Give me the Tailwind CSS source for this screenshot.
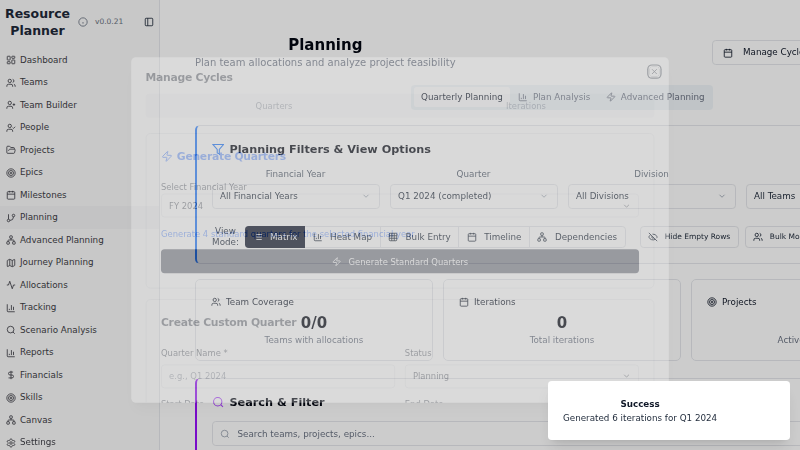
<!DOCTYPE html>
<html lang="en" class="text-[10px]">
<head>
    <meta charset="UTF-8">
    <meta name="viewport" content="width=device-width, initial-scale=1.0">
    <title>Resource Planner - Planning</title>
    <script src="https://cdn.jsdelivr.net/npm/@tailwindcss/browser@4"></script>
</head>
<body class="relative w-[80rem] h-[45rem] overflow-hidden bg-white text-gray-900 font-['DejaVu_Sans',sans-serif] blur-[0.3px]">
    <!-- icon sprite (lucide shapes) -->
    <svg class="hidden" xmlns="http://www.w3.org/2000/svg">
        <symbol id="i-dashboard" viewBox="0 0 24 24"><rect x="3" y="3" width="7" height="9" rx="1"/><rect x="14" y="3" width="7" height="5" rx="1"/><rect x="14" y="12" width="7" height="9" rx="1"/><rect x="3" y="16" width="7" height="5" rx="1"/></symbol>
        <symbol id="i-users" viewBox="0 0 24 24"><path d="M16 21v-2a4 4 0 0 0-4-4H6a4 4 0 0 0-4 4v2"/><circle cx="9" cy="7" r="4"/><path d="M22 21v-2a4 4 0 0 0-3-3.87"/><path d="M16 3.13a4 4 0 0 1 0 7.75"/></symbol>
        <symbol id="i-user-plus" viewBox="0 0 24 24"><path d="M16 21v-2a4 4 0 0 0-4-4H6a4 4 0 0 0-4 4v2"/><circle cx="9" cy="7" r="4"/><path d="M19 8v6"/><path d="M22 11h-6"/></symbol>
        <symbol id="i-user-check" viewBox="0 0 24 24"><path d="M16 21v-2a4 4 0 0 0-4-4H6a4 4 0 0 0-4 4v2"/><circle cx="9" cy="7" r="4"/><path d="m16 11 2 2 4-4"/></symbol>
        <symbol id="i-folder" viewBox="0 0 24 24"><path d="m6 14 1.5-2.9A2 2 0 0 1 9.24 10H20a2 2 0 0 1 1.94 2.5l-1.54 6a2 2 0 0 1-1.95 1.5H4a2 2 0 0 1-2-2V5a2 2 0 0 1 2-2h3.9a2 2 0 0 1 1.69.9l.81 1.2a2 2 0 0 0 1.67.9H18a2 2 0 0 1 2 2v2"/></symbol>
        <symbol id="i-target" viewBox="0 0 24 24"><circle cx="12" cy="12" r="10"/><circle cx="12" cy="12" r="6"/><circle cx="12" cy="12" r="2"/></symbol>
        <symbol id="i-calendar" viewBox="0 0 24 24"><path d="M8 2v4"/><path d="M16 2v4"/><rect x="3" y="4" width="18" height="18" rx="2"/><path d="M3 10h18"/></symbol>
        <symbol id="i-branch" viewBox="0 0 24 24"><path d="M6 3v12"/><circle cx="18" cy="6" r="3"/><circle cx="6" cy="18" r="3"/><path d="M18 9a9 9 0 0 1-9 9"/></symbol>
        <symbol id="i-network" viewBox="0 0 24 24"><rect x="16" y="16" width="6" height="6" rx="1"/><rect x="2" y="16" width="6" height="6" rx="1"/><rect x="9" y="2" width="6" height="6" rx="1"/><path d="M5 16v-3a1 1 0 0 1 1-1h12a1 1 0 0 1 1 1v3"/><path d="M12 12V8"/></symbol>
        <symbol id="i-map" viewBox="0 0 24 24"><path d="M14.106 5.553a2 2 0 0 0 1.788 0l3.659-1.83A1 1 0 0 1 21 4.619v12.764a1 1 0 0 1-.553.894l-4.553 2.277a2 2 0 0 1-1.788 0l-4.212-2.106a2 2 0 0 0-1.788 0l-3.659 1.83A1 1 0 0 1 3 19.381V6.618a1 1 0 0 1 .553-.894l4.553-2.277a2 2 0 0 1 1.788 0z"/><path d="M15 5.764v15"/><path d="M9 3.236v15"/></symbol>
        <symbol id="i-activity" viewBox="0 0 24 24"><path d="M22 12h-4l-3 9L9 3l-3 9H2"/></symbol>
        <symbol id="i-chart" viewBox="0 0 24 24"><path d="M3 3v16a2 2 0 0 0 2 2h16"/><path d="M18 17V9"/><path d="M13 17V5"/><path d="M8 17v-3"/></symbol>
        <symbol id="i-search" viewBox="0 0 24 24"><circle cx="11" cy="11" r="8"/><path d="m21 21-4.3-4.3"/></symbol>
        <symbol id="i-dollar" viewBox="0 0 24 24"><path d="M12 2v20"/><path d="M17 5H9.5a3.5 3.5 0 0 0 0 7h5a3.5 3.5 0 0 1 0 7H6"/></symbol>
        <symbol id="i-settings" viewBox="0 0 24 24"><path d="M12.22 2h-.44a2 2 0 0 0-2 2v.18a2 2 0 0 1-1 1.73l-.43.25a2 2 0 0 1-2 0l-.15-.08a2 2 0 0 0-2.73.73l-.22.38a2 2 0 0 0 .73 2.73l.15.1a2 2 0 0 1 1 1.72v.51a2 2 0 0 1-1 1.74l-.15.09a2 2 0 0 0-.73 2.73l.22.38a2 2 0 0 0 2.73.73l.15-.08a2 2 0 0 1 2 0l.43.25a2 2 0 0 1 1 1.73V20a2 2 0 0 0 2 2h.44a2 2 0 0 0 2-2v-.18a2 2 0 0 1 1-1.73l.43-.25a2 2 0 0 1 2 0l.15.08a2 2 0 0 0 2.73-.73l.22-.39a2 2 0 0 0-.73-2.73l-.15-.08a2 2 0 0 1-1-1.74v-.5a2 2 0 0 1 1-1.74l.15-.09a2 2 0 0 0 .73-2.73l-.22-.38a2 2 0 0 0-2.73-.73l-.15.08a2 2 0 0 1-2 0l-.43-.25a2 2 0 0 1-1-1.73V4a2 2 0 0 0-2-2z"/><circle cx="12" cy="12" r="3"/></symbol>
        <symbol id="i-info" viewBox="0 0 24 24"><circle cx="12" cy="12" r="10"/><path d="M12 16v-4"/><path d="M12 8h.01"/></symbol>
        <symbol id="i-panel" viewBox="0 0 24 24"><rect x="3" y="3" width="18" height="18" rx="2"/><path d="M9 3v18"/></symbol>
        <symbol id="i-x" viewBox="0 0 24 24"><path d="M18 6 6 18"/><path d="m6 6 12 12"/></symbol>
        <symbol id="i-zap" viewBox="0 0 24 24"><path d="M4 14a1 1 0 0 1-.78-1.63l9.9-10.2a.5.5 0 0 1 .86.46l-1.92 6.02A1 1 0 0 0 13 10h7a1 1 0 0 1 .78 1.63l-9.9 10.2a.5.5 0 0 1-.86-.46l1.92-6.02A1 1 0 0 0 11 14z"/></symbol>
        <symbol id="i-filter" viewBox="0 0 24 24"><path d="M22 3H2l8 9.46V19l4 2v-8.54z"/></symbol>
        <symbol id="i-list" viewBox="0 0 24 24"><path d="M3 12h.01"/><path d="M3 18h.01"/><path d="M3 6h.01"/><path d="M8 12h13"/><path d="M8 18h13"/><path d="M8 6h13"/></symbol>
        <symbol id="i-grid" viewBox="0 0 24 24"><rect x="3" y="3" width="18" height="18" rx="2"/><path d="M3 9h18"/><path d="M3 15h18"/><path d="M9 3v18"/><path d="M15 3v18"/></symbol>
        <symbol id="i-eye-off" viewBox="0 0 24 24"><path d="M10.733 5.076a10.744 10.744 0 0 1 11.205 6.575 1 1 0 0 1 0 .696 10.747 10.747 0 0 1-1.444 2.49"/><path d="M14.084 14.158a3 3 0 0 1-4.242-4.242"/><path d="M17.479 17.499a10.75 10.75 0 0 1-15.417-5.151 1 1 0 0 1 0-.696 10.75 10.75 0 0 1 4.446-5.143"/><path d="m2 2 20 20"/></symbol>
        <symbol id="i-chevron" viewBox="0 0 24 24"><path d="m6 9 6 6 6-6"/></symbol>
    </svg>

    <div class="flex h-full">
        <!-- sidebar -->
        <aside class="w-64 shrink-0 h-full bg-neutral-50 border-r border-gray-200 text-zinc-700">
            <div class="flex items-center h-[4.875rem] pb-[0.4rem] pl-2">
                <div class="w-[6.5rem] text-xl font-bold text-center text-gray-800">Resource Planner</div>
                <svg class="size-4 ml-[0.8rem] text-gray-500 fill-none stroke-current stroke-2"><use href="#i-info"/></svg>
                <span class="ml-[0.7rem] text-xs text-gray-500">v0.0.21</span>
                <svg class="size-4 ml-auto mr-[0.5rem] text-gray-800 fill-none stroke-current stroke-2"><use href="#i-panel"/></svg>
            </div>
            <nav class="text-sm">
                <a class="flex items-center gap-1.5 h-9 pl-2.5"><svg class="size-4 fill-none stroke-current stroke-2"><use href="#i-dashboard"/></svg>Dashboard</a>
                <a class="flex items-center gap-1.5 h-9 pl-2.5"><svg class="size-4 fill-none stroke-current stroke-2"><use href="#i-users"/></svg>Teams</a>
                <a class="flex items-center gap-1.5 h-9 pl-2.5"><svg class="size-4 fill-none stroke-current stroke-2"><use href="#i-user-plus"/></svg>Team Builder</a>
                <a class="flex items-center gap-1.5 h-9 pl-2.5"><svg class="size-4 fill-none stroke-current stroke-2"><use href="#i-user-check"/></svg>People</a>
                <a class="flex items-center gap-1.5 h-9 pl-2.5"><svg class="size-4 fill-none stroke-current stroke-2"><use href="#i-folder"/></svg>Projects</a>
                <a class="flex items-center gap-1.5 h-9 pl-2.5"><svg class="size-4 fill-none stroke-current stroke-2"><use href="#i-target"/></svg>Epics</a>
                <a class="flex items-center gap-1.5 h-9 pl-2.5"><svg class="size-4 fill-none stroke-current stroke-2"><use href="#i-calendar"/></svg>Milestones</a>
                <a class="flex items-center gap-1.5 h-9 pl-2.5 bg-zinc-100"><svg class="size-4 fill-none stroke-current stroke-2"><use href="#i-branch"/></svg>Planning</a>
                <a class="flex items-center gap-1.5 h-9 pl-2.5"><svg class="size-4 fill-none stroke-current stroke-2"><use href="#i-network"/></svg>Advanced Planning</a>
                <a class="flex items-center gap-1.5 h-9 pl-2.5"><svg class="size-4 fill-none stroke-current stroke-2"><use href="#i-map"/></svg>Journey Planning</a>
                <a class="flex items-center gap-1.5 h-9 pl-2.5"><svg class="size-4 fill-none stroke-current stroke-2"><use href="#i-activity"/></svg>Allocations</a>
                <a class="flex items-center gap-1.5 h-9 pl-2.5"><svg class="size-4 fill-none stroke-current stroke-2"><use href="#i-chart"/></svg>Tracking</a>
                <a class="flex items-center gap-1.5 h-9 pl-2.5"><svg class="size-4 fill-none stroke-current stroke-2"><use href="#i-search"/></svg>Scenario Analysis</a>
                <a class="flex items-center gap-1.5 h-9 pl-2.5"><svg class="size-4 fill-none stroke-current stroke-2"><use href="#i-chart"/></svg>Reports</a>
                <a class="flex items-center gap-1.5 h-9 pl-2.5"><svg class="size-4 fill-none stroke-current stroke-2"><use href="#i-dollar"/></svg>Financials</a>
                <a class="flex items-center gap-1.5 h-9 pl-2.5"><svg class="size-4 fill-none stroke-current stroke-2"><use href="#i-target"/></svg>Skills</a>
                <a class="flex items-center gap-1.5 h-9 pl-2.5"><svg class="size-4 fill-none stroke-current stroke-2"><use href="#i-network"/></svg>Canvas</a>
                <a class="flex items-center gap-1.5 h-9 pl-2.5"><svg class="size-4 fill-none stroke-current stroke-2"><use href="#i-settings"/></svg>Settings</a>
            </nav>
        </aside>

        <!-- main -->
        <main class="flex-1 min-w-0 pl-14 pt-[3.6rem]">
            <div class="flex justify-between items-start w-[62.5rem]">
                <div class="text-center">
                    <h1 class="text-2xl font-bold text-gray-950">Planning</h1>
                    <p class="text-base text-gray-500 leading-[1.6rem] -mt-[0.1rem]">Plan team allocations and analyze project feasibility</p>
                </div>
                <button class="shrink-0 flex items-center gap-4 h-10 px-4 mt-[0.4rem] border border-gray-200 rounded-md bg-white text-sm font-medium text-gray-900 whitespace-nowrap">
                    <svg class="size-4 fill-none stroke-current stroke-2"><use href="#i-calendar"/></svg>Manage Cycles
                </button>
            </div>

            <div class="flex items-center w-fit h-10 p-1 ml-[21.6rem] mt-[1.4rem] rounded-md bg-slate-100 text-sm text-gray-500">
                <span class="px-3 h-full flex items-center bg-white rounded-sm text-gray-900">Quarterly Planning</span>
                <span class="pl-3 pr-[0.8rem] flex items-center gap-2"><svg class="size-4 fill-none stroke-current stroke-2"><use href="#i-chart"/></svg>Plan Analysis</span>
                <span class="pl-3 pr-[0.6rem] flex items-center gap-2"><svg class="size-4 fill-none stroke-current stroke-2"><use href="#i-zap"/></svg>Advanced Planning</span>
            </div>

            <!-- filters -->
            <section class="mt-[1.5rem] w-[98.2rem] h-[13.9rem] p-6 pl-[1.45rem] bg-white border border-gray-200 border-l-[0.25rem] border-l-blue-500 rounded-lg">
                <h2 class="flex items-center gap-[0.55rem] text-lg font-semibold text-gray-950"><svg class="size-5 text-blue-500 fill-none stroke-current stroke-2"><use href="#i-filter"/></svg>Planning Filters &amp; View Options</h2>
                <div class="flex gap-4 mt-[1rem]">
                    <div class="w-[16.8rem]"><div class="text-sm text-center text-gray-600 mb-[0.275rem]">Financial Year</div>
                        <div class="flex items-center justify-between h-10 px-3 border border-gray-200 rounded-md text-sm text-gray-800">All Financial Years<svg class="size-4 text-gray-400 fill-none stroke-current stroke-2"><use href="#i-chevron"/></svg></div></div>
                    <div class="w-[16.8rem]"><div class="text-sm text-center text-gray-600 mb-[0.275rem]">Quarter</div>
                        <div class="flex items-center justify-between h-10 px-3 border border-gray-200 rounded-md text-sm text-gray-800">Q1 2024 (completed)<svg class="size-4 text-gray-400 fill-none stroke-current stroke-2"><use href="#i-chevron"/></svg></div></div>
                    <div class="w-[16.8rem]"><div class="text-sm text-center text-gray-600 mb-[0.275rem]">Division</div>
                        <div class="flex items-center justify-between h-10 px-3 border border-gray-200 rounded-md text-sm text-gray-800">All Divisions<svg class="size-4 text-gray-400 fill-none stroke-current stroke-2"><use href="#i-chevron"/></svg></div></div>
                    <div class="w-[16.8rem]"><div class="text-sm text-center text-gray-600 mb-[0.275rem]">Team</div>
                        <div class="flex items-center justify-between h-10 px-3 border border-gray-200 rounded-md text-sm text-gray-800">All Teams<svg class="size-4 text-gray-400 fill-none stroke-current stroke-2"><use href="#i-chevron"/></svg></div></div>
                </div>
                <div class="flex items-center mt-[1.7rem] text-sm">
                    <span class="w-[2.8rem] mr-[0.5rem] leading-[1.1rem] text-center text-gray-800">View Mode:</span>
                    <div class="flex h-9 border border-gray-200 rounded-md text-gray-800 whitespace-nowrap">
                        <span class="flex items-center gap-3 pl-[0.8rem] pr-3 -ml-px -my-px bg-slate-900 text-white rounded-l-md"><svg class="size-4 fill-none stroke-current stroke-2"><use href="#i-list"/></svg>Matrix</span>
                        <span class="flex items-center gap-3 px-3 border-r border-gray-200"><svg class="size-4 fill-none stroke-current stroke-2"><use href="#i-chart"/></svg>Heat Map</span>
                        <span class="flex items-center gap-3 px-3 border-r border-gray-200"><svg class="size-4 fill-none stroke-current stroke-2"><use href="#i-grid"/></svg>Bulk Entry</span>
                        <span class="flex items-center gap-3 px-3 border-r border-gray-200"><svg class="size-4 fill-none stroke-current stroke-2"><use href="#i-calendar"/></svg>Timeline</span>
                        <span class="flex items-center gap-3 px-3"><svg class="size-4 fill-none stroke-current stroke-2"><use href="#i-network"/></svg>Dependencies</span>
                    </div>
                    <button class="flex items-center gap-[0.65rem] h-9 px-3 ml-[1.4rem] border border-gray-200 rounded-md text-xs font-medium text-gray-800 whitespace-nowrap"><svg class="size-4 fill-none stroke-current stroke-2"><use href="#i-eye-off"/></svg>Hide Empty Rows</button>
                    <button class="flex items-center gap-[0.65rem] h-9 px-3 ml-[0.6rem] border border-gray-200 rounded-md text-xs font-medium text-gray-800 whitespace-nowrap"><svg class="size-4 fill-none stroke-current stroke-2"><use href="#i-users"/></svg>Bulk Mode</button>
                </div>
            </section>

            <!-- stats -->
            <div class="grid grid-cols-4 gap-4 w-[98.2rem] mt-[1.5rem] text-sm">
                <div class="h-[8.2rem] p-6 pt-[1.6rem] border border-gray-200 rounded-lg">
                    <div class="flex items-center gap-2 text-gray-900"><svg class="size-4 fill-none stroke-current stroke-2"><use href="#i-users"/></svg>Team Coverage</div>
                    <div class="mt-[0.6rem] text-center text-2xl font-bold text-gray-950">0/0</div>
                    <div class="text-center text-gray-500">Teams with allocations</div>
                </div>
                <div class="h-[8.2rem] p-6 pt-[1.6rem] border border-gray-200 rounded-lg">
                    <div class="flex items-center gap-2 text-gray-900"><svg class="size-4 fill-none stroke-current stroke-2"><use href="#i-calendar"/></svg>Iterations</div>
                    <div class="mt-[0.6rem] text-center text-2xl font-bold text-gray-950">0</div>
                    <div class="text-center text-gray-500">Total iterations</div>
                </div>
                <div class="h-[8.2rem] p-6 pt-[1.6rem] border border-gray-200 rounded-lg">
                    <div class="flex items-center gap-2 text-gray-900"><svg class="size-4 fill-none stroke-current stroke-2"><use href="#i-target"/></svg>Projects</div>
                    <div class="mt-[0.6rem] text-center text-2xl font-bold text-gray-950">0</div>
                    <div class="text-center text-gray-500">Active projects</div>
                </div>
                <div class="h-[8.2rem] border border-gray-200 rounded-lg"></div>
            </div>

            <!-- search -->
            <section class="mt-[1.7rem] w-[98.2rem] p-6 pl-[1.45rem] border border-gray-200 border-l-[0.25rem] border-l-purple-600 rounded-lg">
                <h2 class="flex items-center gap-[0.55rem] text-lg font-semibold text-gray-950"><svg class="size-5 text-purple-500 fill-none stroke-current stroke-2"><use href="#i-search"/></svg>Search &amp; Filter</h2>
                <div class="flex items-center gap-3 h-10 mt-[1rem] px-3 border border-gray-200 rounded-md text-sm text-gray-500">
                    <svg class="size-4 text-gray-400 fill-none stroke-current stroke-2"><use href="#i-search"/></svg>Search teams, projects, epics...
                </div>
            </section>
        </main>
    </div>

    <!-- dialog backdrop -->
    <div class="absolute inset-0 bg-black/20"></div>

    <!-- dialog, caught part-way through its fade -->
    <div class="absolute left-[12rem] top-[5rem] w-[56rem] h-[36rem] p-6 pt-[1.6rem] overflow-hidden bg-white rounded-lg shadow-lg opacity-[0.27] scale-[0.96] text-sm text-gray-900">
        <svg class="absolute top-4 right-4 size-4 rounded-sm ring-[1.25px] ring-gray-800 ring-offset-[1.25px] fill-none stroke-current stroke-2"><use href="#i-x"/></svg>
        <h2 class="text-lg font-semibold tracking-tight leading-none">Manage Cycles</h2>
        <div class="grid grid-cols-2 h-10 mt-[1.1rem] p-1 rounded-md bg-gray-100 text-gray-500 text-center">
            <span class="self-center">Quarters</span><span class="self-center">Iterations</span>
        </div>
        <div class="mt-[1.57rem] p-6 border border-gray-200 rounded-lg">
            <h3 class="flex items-center gap-[0.4rem] text-lg font-semibold tracking-tight text-blue-600"><svg class="size-5 fill-none stroke-current stroke-2"><use href="#i-zap"/></svg>Generate Quarters</h3>
            <div class="mt-[1.81rem] font-medium leading-none">Select Financial Year</div>
            <div class="flex items-center justify-between h-10 mt-[0.31rem] px-3 border border-gray-200 rounded-md">FY 2024<svg class="size-4 fill-none stroke-current stroke-2"><use href="#i-chevron"/></svg></div>
            <div class="mt-[1.26rem] text-blue-600 leading-none">Generate 4 standard quarters for the selected financial year</div>
            <button class="flex items-center justify-center gap-3 w-full h-10 mt-[1.16rem] rounded-md bg-slate-900 text-white"><svg class="size-4 fill-none stroke-current stroke-2"><use href="#i-zap"/></svg>Generate Standard Quarters</button>
        </div>
        <div class="mt-[1.1rem] p-6 border border-gray-200 rounded-lg">
            <h3 class="text-lg font-semibold tracking-tight">Create Custom Quarter</h3>
            <div class="grid grid-cols-2 gap-x-4 mt-[1.8rem]">
                <div>
                    <div class="font-medium leading-none">Quarter Name *</div>
                    <div class="flex items-center h-10 mt-[0.72rem] px-3 border border-gray-200 rounded-md text-gray-500">e.g., Q1 2024</div>
                    <div class="mt-[1.2rem] font-medium leading-none">Start Date</div>
                </div>
                <div>
                    <div class="font-medium leading-none">Status</div>
                    <div class="flex items-center justify-between h-10 mt-[0.72rem] px-3 border border-gray-200 rounded-md">Planning<svg class="size-4 fill-none stroke-current stroke-2"><use href="#i-chevron"/></svg></div>
                    <div class="mt-[1.2rem] font-medium leading-none">End Date</div>
                </div>
            </div>
        </div>
    </div>

    <!-- toast -->
    <div class="absolute left-[54.8rem] top-[38.1rem] w-[24.2rem] h-[5.9rem] p-6 pt-[1.65rem] bg-white rounded-md shadow-lg text-sm text-gray-900">
        <div class="flex flex-col items-center w-fit">
            <div class="font-semibold leading-[1.25rem]">Success</div>
            <div class="mt-[0.15rem] text-gray-800 leading-[1.25rem]">Generated 6 iterations for Q1 2024</div>
        </div>
    </div>
</body>
</html>
